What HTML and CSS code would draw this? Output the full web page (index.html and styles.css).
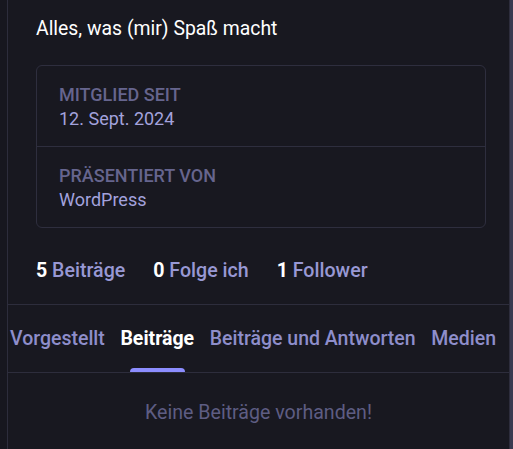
FILE: index.html
```html
<!DOCTYPE html>
<html lang="de">
<head>
<meta charset="utf-8">
<link rel="stylesheet" href="styles.css">
</head>
<body>
<div class="page">
  <main class="column">
    <div class="account">
      <p class="note">Alles, was (mir) Spaß macht</p>
      <dl class="fields">
        <div class="field">
          <dt>Mitglied seit</dt>
          <dd>12. Sept. 2024</dd>
        </div>
        <div class="field">
          <dt>Präsentiert von</dt>
          <dd>WordPress</dd>
        </div>
      </dl>
      <div class="counters">
        <span class="counter"><strong>5</strong> Beiträge</span>
        <span class="counter"><strong>0</strong> Folge ich</span>
        <span class="counter"><strong>1</strong> Follower</span>
      </div>
    </div>
    <nav class="tabs">
      <a class="tab">Vorgestellt</a>
      <a class="tab active">Beiträge</a>
      <a class="tab">Beiträge und Antworten</a>
      <a class="tab">Medien</a>
    </nav>
    <div class="empty">Keine Beiträge vorhanden!</div>
  </main>
  <div class="scrollbar"></div>
</div>
</body>
</html>
```

FILE: styles.css
```css
html, body {
  margin: 0;
  padding: 0;
  background: #17171f;
  height: 100%;
  overflow: hidden;
}
body {
  font-family: Roboto, "Liberation Sans", sans-serif;
  color: #fff;
}
.page {
  display: flex;
  height: 100%;
  padding-left: 7px;
}
.column {
  width: 501px;
  border-left: 1px solid #2d2d3c;
  border-right: 1px solid #2d2d3c;
  background: #181820;
}
.scrollbar {
  width: 3px;
  background: #3a3a50;
}
.account {
  padding: 17px 23px 0 28px;
}
.note {
  margin: 0;
  font-size: 19.4px;
  line-height: 24px;
}
.fields {
  margin: 24px 0 0;
  border: 1px solid #2e2e3e;
  border-radius: 6px;
}
.field {
  padding: 18px 22px 17px;
  height: 45px;
}
.field + .field {
  border-top: 1px solid #2e2e3e;
}
.field dt {
  font-size: 18px;
  line-height: 22px;
  font-weight: 500;
  text-transform: uppercase;
  color: #66658e;
}
.field dd {
  margin: 2px 0 0;
  font-size: 18px;
  line-height: 22px;
  color: #a3a2dd;
}
.counters {
  display: flex;
  gap: 28px;
  padding: 31px 0 21px;
  font-size: 19.6px;
  line-height: 24px;
  font-weight: 500;
  color: #9898d4;
}
.counter strong {
  color: #fff;
  font-weight: 700;
}
.tabs {
  display: flex;
  justify-content: space-between;
  border-top: 1px solid #2d2d3c;
  border-bottom: 1px solid #2d2d3c;
  padding: 0 13px 0 2px;
}
.tab {
  position: relative;
  font-size: 19.5px;
  font-weight: 500;
  line-height: 24px;
  padding: 22px 0 21px;
  color: #8e8ecb;
}
.tab.active {
  color: #fff;
  font-weight: 700;
}
.tab.active::after {
  content: "";
  position: absolute;
  left: 10px;
  right: 9px;
  bottom: 0;
  height: 4px;
  border-radius: 4px 4px 0 0;
  background: #8c8dff;
}
.empty {
  text-align: center;
  padding: 28px 0;
  font-size: 19.6px;
  line-height: 24px;
  color: #5e5d83;
}
```
